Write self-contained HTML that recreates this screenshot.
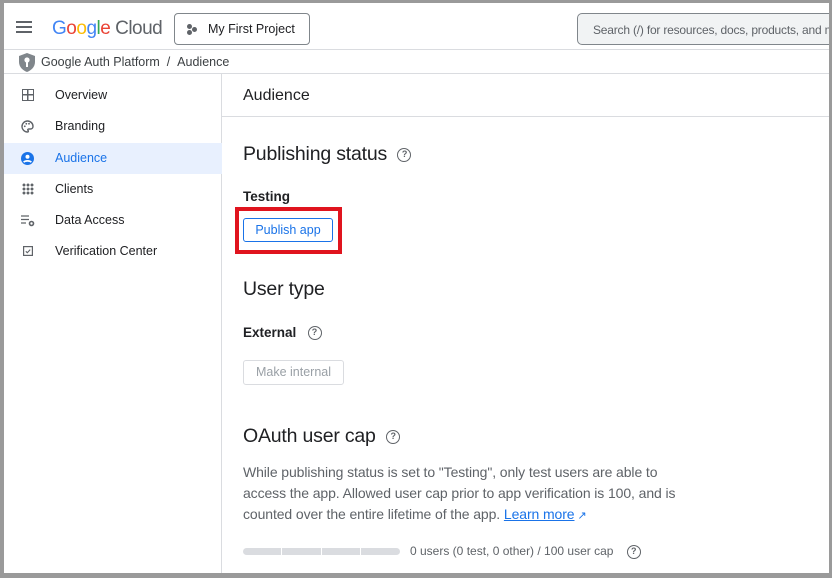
<!DOCTYPE html>
<html><head><meta charset="utf-8"><style>
*{box-sizing:border-box;margin:0;padding:0}
body{width:834px;height:582px;background:#fff;font-family:"Liberation Sans",Arial,sans-serif;color:#202124;position:relative;overflow:hidden}
.frame{position:absolute;left:0;top:0;width:832px;height:578px;border:3px solid #9a9a9a;border-left-width:4px;border-bottom-width:5px;overflow:hidden;background:#fff}
.a{position:absolute}
.hl{position:absolute;height:1px;background:#dadce0}
.nav{position:absolute;left:0;width:218px;height:31px;font-size:12.5px;color:#202124}
.nav span{position:absolute;left:51px;top:8px}
.nav i{position:absolute;left:18px;top:9px;width:12px;height:12px}
.q{display:inline-block;width:14px;height:14px;border:1.5px solid #5f6368;border-radius:50%;font-size:9px;line-height:11px;text-align:center;color:#5f6368;font-weight:bold;vertical-align:middle;font-style:normal}
</style></head><body>
<div class="frame">
<div class="a" style="left:12px;top:18px;width:16px;height:2px;background:#5f6368;box-shadow:0 5px 0 #5f6368,0 10px 0 #5f6368"></div>
<div class="a" style="left:48px;top:15px;font-size:19px;letter-spacing:-0.5px"><span style="color:#4285f4">G</span><span style="color:#ea4335">o</span><span style="color:#fbbc05">o</span><span style="color:#4285f4">g</span><span style="color:#34a853">l</span><span style="color:#ea4335">e</span> <span style="color:#5f6368">Cloud</span></div>
<div class="a" style="left:170px;top:10px;width:136px;height:32px;border:1px solid #80868b;border-radius:4px;font-size:12.5px;color:#202124">
<span class="a" style="left:12px;top:10px;width:5px;height:5px;border-radius:50%;background:#5f6368;box-shadow:5px 3px 0 #5f6368,0 6px 0 #5f6368"></span>
<span class="a" style="left:33px;top:8px">My First Project</span></div>
<div class="a" style="left:573px;top:10px;width:260px;height:32px;border:1px solid #80868b;border-radius:5px;background:#f1f3f4;font-size:12px;color:#5f6368;white-space:nowrap"><span class="a" style="left:15px;top:9px;letter-spacing:-0.2px">Search (/) for resources, docs, products, and more</span></div>
<div class="hl" style="left:0;top:46px;width:830px"></div>
<svg class="a" style="left:15px;top:50px" width="16" height="19" viewBox="0 0 16 19"><path d="M8 0L16 3V9C16 14 12 17.5 8 19C4 17.5 0 14 0 9V3Z" fill="#80868b"/><circle cx="8" cy="7" r="2.6" fill="#fff"/><rect x="7" y="8" width="2" height="6" fill="#fff"/></svg>
<div class="a" style="left:37px;top:52px;font-size:12.5px;color:#3c4043">Google Auth Platform &nbsp;/ &nbsp;Audience</div>
<div class="hl" style="left:0;top:70px;width:830px"></div>
<div class="a" style="left:217px;top:71px;width:1px;height:510px;background:#dadce0"></div>
<div class="nav" style="top:77px"><i style="border:1.5px solid #5f6368;background:linear-gradient(#5f6368,#5f6368) 4px 0/1.5px 100% no-repeat,linear-gradient(#5f6368,#5f6368) 0 4px/100% 1.5px no-repeat"></i><span>Overview</span></div>
<div class="nav" style="top:108px"><svg class="a" style="left:17px;top:9px" width="13" height="13" viewBox="0 0 13 13"><path d="M6.5 1A5.5 5.5 0 1 0 6.5 12C7.5 12 7.6 11 7 10.4C6.4 9.7 7 9 7.8 9H9.3C10.9 9 12 7.9 12 6.3C12 3.4 9.5 1 6.5 1Z" fill="none" stroke="#5f6368" stroke-width="1.4"/><circle cx="3.8" cy="6.3" r=".9" fill="#5f6368"/><circle cx="5.3" cy="3.8" r=".9" fill="#5f6368"/><circle cx="8" cy="3.8" r=".9" fill="#5f6368"/></svg><span>Branding</span></div>
<div class="nav" style="top:140px;background:#e8f0fe;color:#1a73e8"><svg class="a" style="left:17px;top:9px" width="13" height="13" viewBox="0 0 13 13"><circle cx="6.5" cy="6.5" r="6.5" fill="#1a73e8"/><circle cx="6.5" cy="4.8" r="2" fill="#fff"/><path d="M2.8 10.2C4 8.4 9 8.4 10.2 10.2" stroke="#fff" stroke-width="1.8" fill="none"/></svg><span>Audience</span></div>
<div class="nav" style="top:171px"><i style="background:radial-gradient(circle,#5f6368 1.3px,transparent 1.6px) 0 0/4px 4px"></i><span>Clients</span></div>
<div class="nav" style="top:202px"><svg class="a" style="left:17px;top:9px" width="14" height="13" viewBox="0 0 14 13"><path d="M0 2H8M0 5.5H8M0 9H5" stroke="#5f6368" stroke-width="1.3"/><circle cx="10.5" cy="9.5" r="2" fill="none" stroke="#5f6368" stroke-width="1.6"/></svg><span>Data Access</span></div>
<div class="nav" style="top:233px"><svg class="a" style="left:19px;top:10px" width="10" height="10" viewBox="0 0 10 10"><rect x=".6" y=".6" width="8.8" height="8.8" fill="none" stroke="#5f6368" stroke-width="1.2"/><path d="M2.8 5.3L4.3 6.7L7.2 3.6" stroke="#5f6368" fill="none" stroke-width="1.1"/></svg><span>Verification Center</span></div>
<div class="a" style="left:239px;top:84px;font-size:16px;color:#202124">Audience</div>
<div class="hl" style="left:218px;top:113px;width:612px"></div>
<div class="a" style="left:239px;top:140px;font-size:19.5px;letter-spacing:-0.2px">Publishing status &nbsp;<i class="q">?</i></div>
<div class="a" style="left:239px;top:186px;font-size:13.5px;font-weight:bold;color:#202124">Testing</div>
<div class="a" style="left:231px;top:204px;width:107px;height:47px;border:4px solid #e0141e"></div>
<div class="a" style="left:239px;top:215px;width:90px;height:24px;border:1px solid #1a73e8;border-radius:3px;font-size:12.5px;color:#1a73e8;text-align:center;line-height:22px">Publish app</div>
<div class="a" style="left:239px;top:275px;font-size:19.5px;letter-spacing:-0.2px">User type</div>
<div class="a" style="left:239px;top:322px;font-size:13.5px;font-weight:bold">External &nbsp; <i class="q">?</i></div>
<div class="a" style="left:239px;top:357px;width:101px;height:25px;border:1px solid #dadce0;border-radius:3px;font-size:12.5px;color:#9aa0a6;text-align:center;line-height:23px">Make internal</div>
<div class="a" style="left:239px;top:422px;font-size:19.5px;letter-spacing:-0.2px">OAuth user cap &nbsp;<i class="q">?</i></div>
<div class="a" style="left:239px;top:459px;width:450px;font-size:14px;line-height:21px;color:#5f6368;letter-spacing:-0.1px">While publishing status is set to "Testing", only test users are able to access the app. Allowed user cap prior to app verification is 100, and is counted over the entire lifetime of the app. <span style="color:#1a73e8;text-decoration:underline">Learn more</span><span style="color:#1a73e8;font-size:11px"> ↗</span></div>
<div class="a" style="left:239px;top:545px;width:157px;height:7px;border-radius:4px;background:linear-gradient(90deg,#dadce0 38px,#fff 38px,#fff 39px,#dadce0 39px,#dadce0 78px,#fff 78px,#fff 79px,#dadce0 79px,#dadce0 117px,#fff 117px,#fff 118px,#dadce0 118px)"></div>
<div class="a" style="left:406px;top:541px;font-size:12px;color:#5f6368">0 users (0 test, 0 other) / 100 user cap &nbsp;&nbsp; <i class="q">?</i></div>
</div>
</body></html>
